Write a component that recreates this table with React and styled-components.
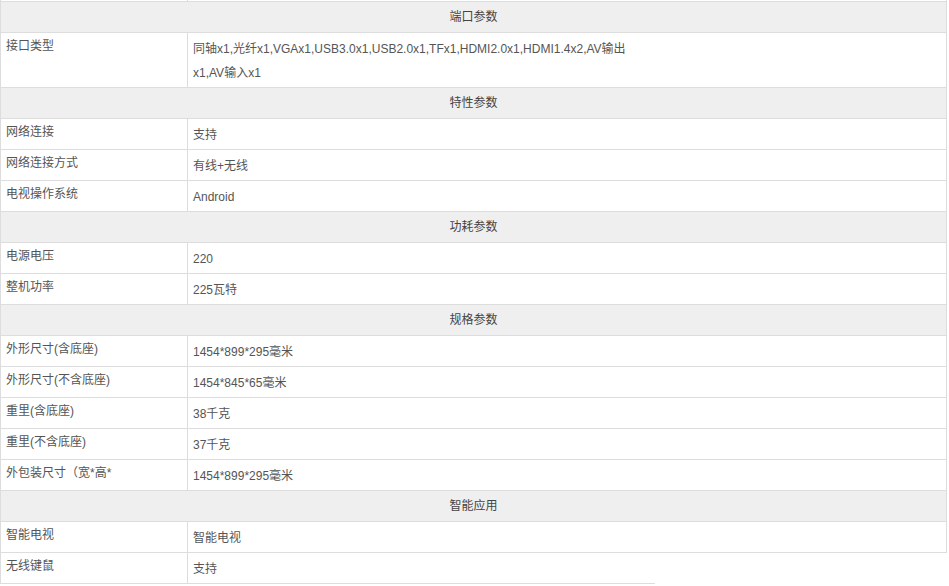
import React from "react";
import styled, { createGlobalStyle } from "styled-components";

const GlobalStyle = createGlobalStyle`
  html, body { margin: 0; padding: 0; background: #ffffff; }
  body {
    font-family: "Liberation Sans", Arial, "Noto Sans CJK SC", sans-serif;
    font-size: 12px;
    color: #555555;
  }
`;

const Sheet = styled.div`
  width: 947px;
  box-sizing: border-box;
  border-left: 1px solid #dddddd;
  border-right: 1px solid #dddddd;
`;

const Clip = styled.div`
  width: ${(p) => p.$width}px;
  overflow: hidden;
`;

const Row = styled.div`
  display: grid;
  grid-template-columns: 187px 1fr;
  border-bottom: 1px solid #dddddd;
`;

const StubRow = styled(Row)`
  height: 1px;
`;

const StubCell = styled.div`
  border-right: ${(p) => (p.$divider ? "1px solid #dddddd" : "none")};
  box-sizing: border-box;
`;

const Section = styled.div`
  height: 30px;
  line-height: 30px;
  text-align: center;
  background: #efefef;
  color: #444444;
  border-bottom: 1px solid #dddddd;
`;

const Label = styled.div`
  box-sizing: border-box;
  border-right: 1px solid #dddddd;
  padding: 3px 5px;
  line-height: 20px;
  color: #555555;
`;

const Value = styled.div`
  padding: 4px 5px 2px;
  line-height: 24px;
  color: #555555;
`;

const groups = [
  {
    title: "端口参数",
    rows: [
      [
        "接口类型",
        <>
          同轴x1,光纤x1,VGAx1,USB3.0x1,USB2.0x1,TFx1,HDMI2.0x1,HDMI1.4x2,AV输出
          <br />
          x1,AV输入x1
        </>,
      ],
    ],
  },
  {
    title: "特性参数",
    rows: [
      ["网络连接", "支持"],
      ["网络连接方式", "有线+无线"],
      ["电视操作系统", "Android"],
    ],
  },
  {
    title: "功耗参数",
    rows: [
      ["电源电压", "220"],
      ["整机功率", "225瓦特"],
    ],
  },
  {
    title: "规格参数",
    rows: [
      ["外形尺寸(含底座)", "1454*899*295毫米"],
      ["外形尺寸(不含底座)", "1454*845*65毫米"],
      ["重里(含底座)", "38千克"],
      ["重里(不含底座)", "37千克"],
      ["外包装尺寸（宽*高*", "1454*899*295毫米"],
    ],
  },
  {
    title: "智能应用",
    rows: [["智能电视", "智能电视"]],
  },
];

const SpecRow = ({ label, value }) => (
  <Row>
    <Label>{label}</Label>
    <Value>{value}</Value>
  </Row>
);

export default function App() {
  return (
    <>
      <GlobalStyle />
      <Sheet>
        <StubRow>
          <StubCell $divider />
          <StubCell />
        </StubRow>
        {groups.map((g) => (
          <React.Fragment key={g.title}>
            <Section>{g.title}</Section>
            {g.rows.map(([l, v]) => (
              <SpecRow key={l} label={l} value={v} />
            ))}
          </React.Fragment>
        ))}
      </Sheet>
      <Clip $width={655}>
        <Sheet>
          <SpecRow label="无线键鼠" value="支持" />
        </Sheet>
      </Clip>
    </>
  );
}
